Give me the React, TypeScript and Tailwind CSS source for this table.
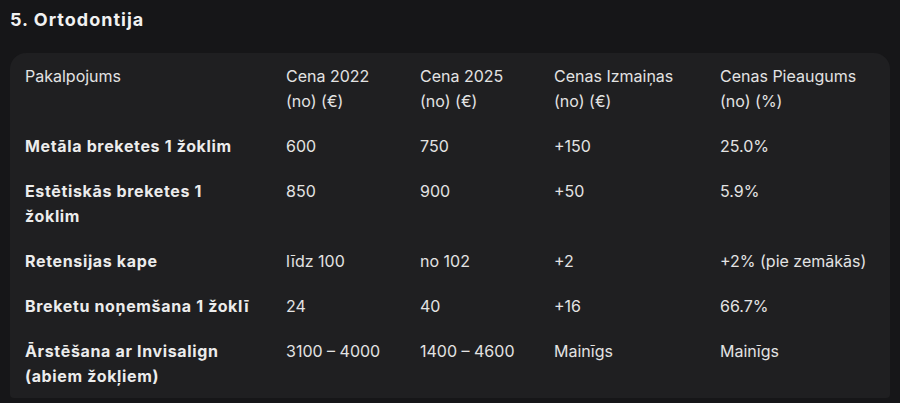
const rows: { name: string; c22: string; c25: string; diff: string; pct: string }[] = [
  { name: "Metāla breketes 1 žoklim", c22: "600", c25: "750", diff: "+150", pct: "25.0%" },
  { name: "Estētiskās breketes 1 žoklim", c22: "850", c25: "900", diff: "+50", pct: "5.9%" },
  { name: "Retensijas kape", c22: "līdz 100", c25: "no 102", diff: "+2", pct: "+2% (pie zemākās)" },
  { name: "Breketu noņemšana 1 žoklī", c22: "24", c25: "40", diff: "+16", pct: "66.7%" },
  { name: "Ārstēšana ar Invisalign (abiem žokļiem)", c22: "3100 – 4000", c25: "1400 – 4600", diff: "Mainīgs", pct: "Mainīgs" },
];

export default function App() {
  return (
    <div className="w-[900px] h-[403px] overflow-hidden bg-[#161618] font-['Inter','Noto_Sans',sans-serif] text-[#e3e3e3]">
      <h2 className="px-[10px] pt-[7px] h-[53px] text-[18px] font-bold leading-[26px] tracking-[1px] text-[#f1f1f1]">
        5. Ortodontija
      </h2>
      <div className="mx-[10px] rounded-t-[16px] rounded-b-[4px] bg-[#1f1f21]">
        <table className="w-[880px] table-fixed border-collapse text-[16px] leading-[25px]">
          <colgroup>
            <col className="w-[261px]" />
            <col className="w-[134px]" />
            <col className="w-[134px]" />
            <col className="w-[166px]" />
            <col className="w-[185px]" />
          </colgroup>
          <thead>
            <tr className="text-left align-top">
              <th className="px-[15px] pt-[11px] pb-[9px] font-normal">Pakalpojums</th>
              <th className="px-[15px] pt-[11px] pb-[9px] font-normal">Cena 2022 (no) (€)</th>
              <th className="px-[15px] pt-[11px] pb-[9px] font-normal">Cena 2025 (no) (€)</th>
              <th className="px-[15px] pt-[11px] pb-[9px] font-normal">Cenas Izmaiņas (no) (€)</th>
              <th className="px-[15px] pt-[11px] pb-[9px] font-normal">Cenas Pieaugums (no) (%)</th>
            </tr>
          </thead>
          <tbody>
            {rows.map((r) => (
              <tr key={r.name} className="align-top">
                <td className="px-[15px] pt-[11px] pb-[9px] font-bold tracking-[0.65px] text-[#ececec]">{r.name}</td>
                <td className="px-[15px] pt-[11px] pb-[9px]">{r.c22}</td>
                <td className="px-[15px] pt-[11px] pb-[9px]">{r.c25}</td>
                <td className="px-[15px] pt-[11px] pb-[9px]">{r.diff}</td>
                <td className="px-[15px] pt-[11px] pb-[9px]">{r.pct}</td>
              </tr>
            ))}
          </tbody>
        </table>
      </div>
    </div>
  );
}
